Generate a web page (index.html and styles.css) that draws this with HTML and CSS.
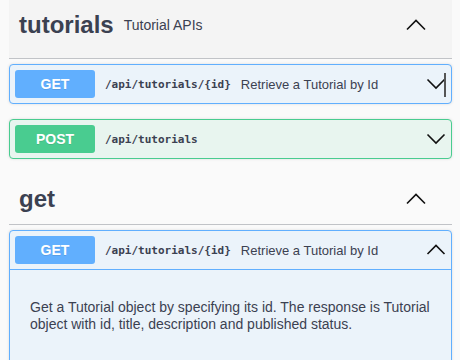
FILE: index.html
```html
<!DOCTYPE html>
<html>
<head>
<meta charset="utf-8">
<link rel="stylesheet" href="styles.css">
</head>
<body>
<div class="wrap">
  <section class="tag-section">
    <div class="tag-header tag-header--hover tag-header--first">
      <span class="tag-name">tutorials</span>
      <small class="tag-desc">Tutorial APIs</small>
      <span class="tag-toggle">
        <svg width="20" height="20" viewBox="0 0 20 20"><polyline points="1,14.5 10,5.5 19,14.5" fill="none" stroke="#111" stroke-width="1.6"/></svg>
      </span>
    </div>
    <div class="opblock opblock--get">
      <div class="opblock-summary">
        <span class="method method--get">GET</span>
        <span class="path">/api/tutorials/{id}</span>
        <span class="summary">Retrieve a Tutorial by Id</span>
        <span class="op-toggle">
          <svg width="20" height="20" viewBox="0 0 20 20"><polyline points="1.5,5.5 10,14 18.5,5.5" fill="none" stroke="#111" stroke-width="1.6"/></svg>
        </span>
      </div>
      <span class="caret"></span>
    </div>
    <div class="opblock opblock--post">
      <div class="opblock-summary">
        <span class="method method--post">POST</span>
        <span class="path">/api/tutorials</span>
        <span class="summary"></span>
        <span class="op-toggle">
          <svg width="20" height="20" viewBox="0 0 20 20"><polyline points="1.5,5.5 10,14 18.5,5.5" fill="none" stroke="#111" stroke-width="1.6"/></svg>
        </span>
      </div>
    </div>
  </section>
  <section class="tag-section">
    <div class="tag-header">
      <span class="tag-name">get</span>
      <small class="tag-desc"></small>
      <span class="tag-toggle">
        <svg width="20" height="20" viewBox="0 0 20 20"><polyline points="1,14.5 10,5.5 19,14.5" fill="none" stroke="#111" stroke-width="1.6"/></svg>
      </span>
    </div>
    <div class="opblock opblock--get opblock--open">
      <div class="opblock-summary opblock-summary--open">
        <span class="method method--get">GET</span>
        <span class="path">/api/tutorials/{id}</span>
        <span class="summary">Retrieve a Tutorial by Id</span>
        <span class="op-toggle">
          <svg width="20" height="20" viewBox="0 0 20 20"><polyline points="1.5,14 10,5.5 18.5,14" fill="none" stroke="#111" stroke-width="1.6"/></svg>
        </span>
      </div>
      <div class="opblock-body">
        <p>Get a Tutorial object by specifying its id. The response is Tutorial object with id, title, description and published status.</p>
      </div>
    </div>
  </section>
</div>
</body>
</html>
```

FILE: styles.css
```css
html, body {
  margin: 0;
  padding: 0;
  background: #fafafa;
  font-family: "Liberation Sans", Arial, sans-serif;
  color: #3b4151;
  overflow: hidden;
}

.wrap {
  padding: 0 8px 0 9px;
}

.tag-header {
  display: flex;
  align-items: center;
  height: 50px;
  padding: 0 26px 0 10px;
  border-bottom: 1px solid #c1c3c7;
  margin-bottom: 5px;
}

.tag-header--first {
  height: 50px;
  padding-bottom: 8px;
}

.tag-header--hover {
  background: #f4f4f4;
}

.tag-name {
  font-size: 24px;
  font-weight: bold;
  color: #3b4151;
}

.tag-desc {
  flex: 1;
  font-size: 14px;
  padding: 0 10px;
  color: #3b4151;
}

.tag-toggle {
  display: flex;
  width: 20px;
  height: 20px;
}

.opblock {
  position: relative;
  border: 1px solid #61affe;
  border-radius: 4px;
  margin: 0 0 15px;
  box-shadow: 0 0 3px rgba(0, 0, 0, 0.12);
}

.opblock--get {
  background: #ebf3fa;
  border-color: #61affe;
}

.opblock--post {
  background: #e8f5ef;
  border-color: #49cc90;
}

.opblock--open {
  min-height: 200px;
}

.opblock-summary {
  display: flex;
  align-items: center;
  padding: 5px;
}

.opblock-summary--open {
  border-bottom: 1px solid #61affe;
}

.method {
  width: 80px;
  height: 28px;
  border-radius: 3px;
  display: flex;
  align-items: center;
  justify-content: center;
  color: #fff;
  font-weight: bold;
  font-size: 14px;
  text-shadow: 0 1px 0 rgba(0, 0, 0, 0.1);
  flex-shrink: 0;
}

.method--get {
  background: #61affe;
}

.method--post {
  background: #49cc90;
}

.path {
  padding: 0 10px;
  font-family: "DejaVu Sans Mono", monospace;
  font-size: 11px;
  font-weight: 600;
  color: #3b4151;
}

.summary {
  flex: 1;
  font-size: 13px;
  color: #3b4151;
}

.op-toggle {
  display: flex;
  width: 20px;
  height: 20px;
}

.caret {
  position: absolute;
  left: 434px;
  top: 8px;
  width: 2px;
  height: 24px;
  background: #555;
}

.opblock-body {
  padding: 15px 20px;
}

.opblock-body p {
  margin: 14px 0;
  font-size: 14px;
  line-height: 16.5px;
  color: #3b4151;
}
```
